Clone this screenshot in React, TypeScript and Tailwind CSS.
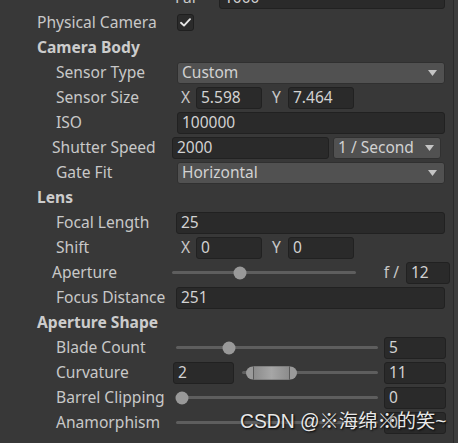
import React from "react";

const font = { fontFamily: '"Noto Sans", "Liberation Sans", sans-serif' };

function Field({ value, className = "" }: { value: string; className?: string }) {
  return (
    <div
      className={`h-[22px] rounded-[3px] border border-[#212121] bg-[#2a2a2a] pl-[4px] flex items-center text-[15.5px] text-[#d2d2d2] leading-none ${className}`}
    >
      {value}
    </div>
  );
}

function Arrow() {
  return (
    <svg width="9" height="6" viewBox="0 0 9 6" className="shrink-0">
      <path d="M0 0 H9 L4.5 6 Z" fill="#c4c4c4" />
    </svg>
  );
}

function Dropdown({ value, className = "", arrowClass = "pr-[7px]" }: { value: string; className?: string; arrowClass?: string }) {
  return (
    <div
      className={`h-[22px] rounded-[3px] border border-[#303030] bg-[#515151] pl-[4px] flex items-center justify-between text-[15.5px] text-[#d2d2d2] leading-none ${arrowClass} ${className}`}
    >
      <span>{value}</span>
      <Arrow />
    </div>
  );
}

function Slider({ className = "", knob }: { className?: string; knob: number | null }) {
  return (
    <div className={`relative h-[3px] rounded-full bg-[#5e5e5e] ${className}`}>
      {knob !== null && (
        <div
          className="absolute top-1/2 h-[13px] w-[13px] -translate-x-1/2 -translate-y-1/2 rounded-full bg-[#999999]"
          style={{ left: `${knob}px` }}
        />
      )}
    </div>
  );
}

function Label({ text, className }: { text: string; className: string }) {
  return <div className={`shrink-0 text-[15.6px] text-[#c8c8c8] whitespace-nowrap ${className}`}>{text}</div>;
}

function Header({ text }: { text: string }) {
  return (
    <div className="flex h-[25px] items-center">
      <div className="pl-[37px] text-[15.6px] font-bold text-[#cccccc]">{text}</div>
    </div>
  );
}

export default function App() {
  return (
    <div className="flex h-[443px] w-[458px] overflow-hidden bg-[#383838]" style={font}>
      <div className="relative flex-1">
        <div className="-mt-[15px] flex flex-col">
          {/* Far row (partially visible) */}
          <div className="flex h-[25px] items-center pr-[8px]">
            <div className="w-[175px] shrink-0" />
            <div className="w-[44px] shrink-0 text-[15.6px] text-[#c8c8c8]">Far</div>
            <Field value="1000" className="flex-1" />
          </div>

          {/* Physical Camera */}
          <div className="flex h-[25px] items-center">
            <Label text="Physical Camera" className="w-[177px] pl-[37px]" />
            <div className="flex h-[17px] w-[17px] items-center justify-center rounded-[3px] border border-[#1f1f1f] bg-[#2b2b2b]">
              <svg width="11" height="9" viewBox="0 0 11 9">
                <path d="M1 4.8 L4 7.6 L10 1.2" stroke="#e6e6e6" strokeWidth="1.9" fill="none" strokeLinecap="round" strokeLinejoin="round" />
              </svg>
            </div>
          </div>

          <Header text="Camera Body" />

          <div className="flex h-[25px] items-center pr-[8px]">
            <Label text="Sensor Type" className="w-[177px] pl-[56px]" />
            <Dropdown value="Custom" className="flex-1" />
          </div>

          <div className="flex h-[25px] items-center pr-[8px]">
            <Label text="Sensor Size" className="w-[177px] pl-[56px]" />
            <div className="w-[19px] shrink-0 pl-[4px] text-[15.6px] text-[#c8c8c8]">X</div>
            <Field value="5.598" className="w-[66px]" />
            <div className="w-[26px] shrink-0 pl-[10px] text-[15.6px] text-[#c8c8c8]">Y</div>
            <Field value="7.464" className="w-[66px]" />
          </div>

          <div className="flex h-[25px] items-center pr-[8px]">
            <Label text="ISO" className="w-[177px] pl-[56px]" />
            <Field value="100000" className="flex-1" />
          </div>

          <div className="flex h-[25px] items-center pr-[12px]">
            <Label text="Shutter Speed" className="w-[172px] pl-[52px]" />
            <Field value="2000" className="flex-1" />
            <Dropdown value="1 / Second" className="ml-[4px] w-[108px]" arrowClass="pr-[6px]" />
          </div>

          <div className="flex h-[25px] items-center pr-[8px]">
            <Label text="Gate Fit" className="w-[177px] pl-[56px]" />
            <Dropdown value="Horizontal" className="flex-1" />
          </div>

          <Header text="Lens" />

          <div className="flex h-[25px] items-center pr-[8px]">
            <Label text="Focal Length" className="w-[176px] pl-[56px]" />
            <Field value="25" className="flex-1" />
          </div>

          <div className="flex h-[25px] items-center pr-[8px]">
            <Label text="Shift" className="w-[177px] pl-[56px]" />
            <div className="w-[19px] shrink-0 pl-[4px] text-[15.6px] text-[#c8c8c8]">X</div>
            <Field value="0" className="w-[66px]" />
            <div className="w-[26px] shrink-0 pl-[10px] text-[15.6px] text-[#c8c8c8]">Y</div>
            <Field value="0" className="w-[66px]" />
          </div>

          <div className="flex h-[25px] items-center pr-[3px]">
            <Label text="Aperture" className="w-[172px] pl-[52px]" />
            <Slider className="w-[184px]" knob={68} />
            <div className="flex-1" />
            <div className="text-[15.6px] text-[#c8c8c8]">f /</div>
            <Field value="12" className="ml-[7px] w-[44px]" />
          </div>

          <div className="flex h-[25px] items-center pr-[8px]">
            <Label text="Focus Distance" className="w-[176px] pl-[56px]" />
            <Field value="251" className="flex-1" />
          </div>

          <Header text="Aperture Shape" />

          <div className="flex h-[25px] items-center pr-[7px]">
            <Label text="Blade Count" className="w-[176px] pl-[56px]" />
            <Slider className="w-[202px]" knob={53} />
            <Field value="5" className="ml-[6px] flex-1" />
          </div>

          <div className="flex h-[25px] items-center pr-[7px]">
            <Label text="Curvature" className="w-[173px] pl-[56px]" />
            <Field value="2" className="w-[61px]" />
            <div className="relative ml-[8px] h-[3px] w-[136px] rounded-full bg-[#5e5e5e]">
              <div className="absolute left-[4px] top-1/2 flex h-[13px] w-[51px] -translate-y-1/2 items-center rounded-full bg-[#9a9a9a]">
                <div className="ml-[7px] h-full w-[1px] bg-[#5a5a5a]" />
                <div className="h-full flex-1 bg-gradient-to-r from-[#8c8c8c] via-[#a6a6a6] to-[#8c8c8c]" />
                <div className="mr-[7px] h-full w-[1px] bg-[#5a5a5a]" />
              </div>
            </div>
            <Field value="11" className="ml-[6px] flex-1" />
          </div>

          <div className="flex h-[25px] items-center pr-[7px]">
            <Label text="Barrel Clipping" className="w-[176px] pl-[56px]" />
            <Slider className="w-[202px]" knob={6} />
            <Field value="0" className="ml-[6px] flex-1" />
          </div>

          <div className="flex h-[25px] items-center pr-[7px]">
            <Label text="Anamorphism" className="w-[176px] pl-[56px]" />
            <Slider className="w-[202px]" knob={null} />
            <Field value="0" className="ml-[6px] flex-1" />
          </div>
        </div>

        <div
          className="absolute left-[240px] top-[408px] whitespace-nowrap text-[19.3px] text-[#e8e8e8] [text-shadow:1px_1px_2px_#000]"
          style={{ fontFamily: '"Liberation Sans", "Noto Sans CJK SC", sans-serif' }}
        >
          CSDN @※海绵※的笑~
        </div>
      </div>
      <div className="w-[1px] bg-[#2a2a2a]" />
      <div className="w-[4px] bg-[#3d3d3d]" />
    </div>
  );
}
